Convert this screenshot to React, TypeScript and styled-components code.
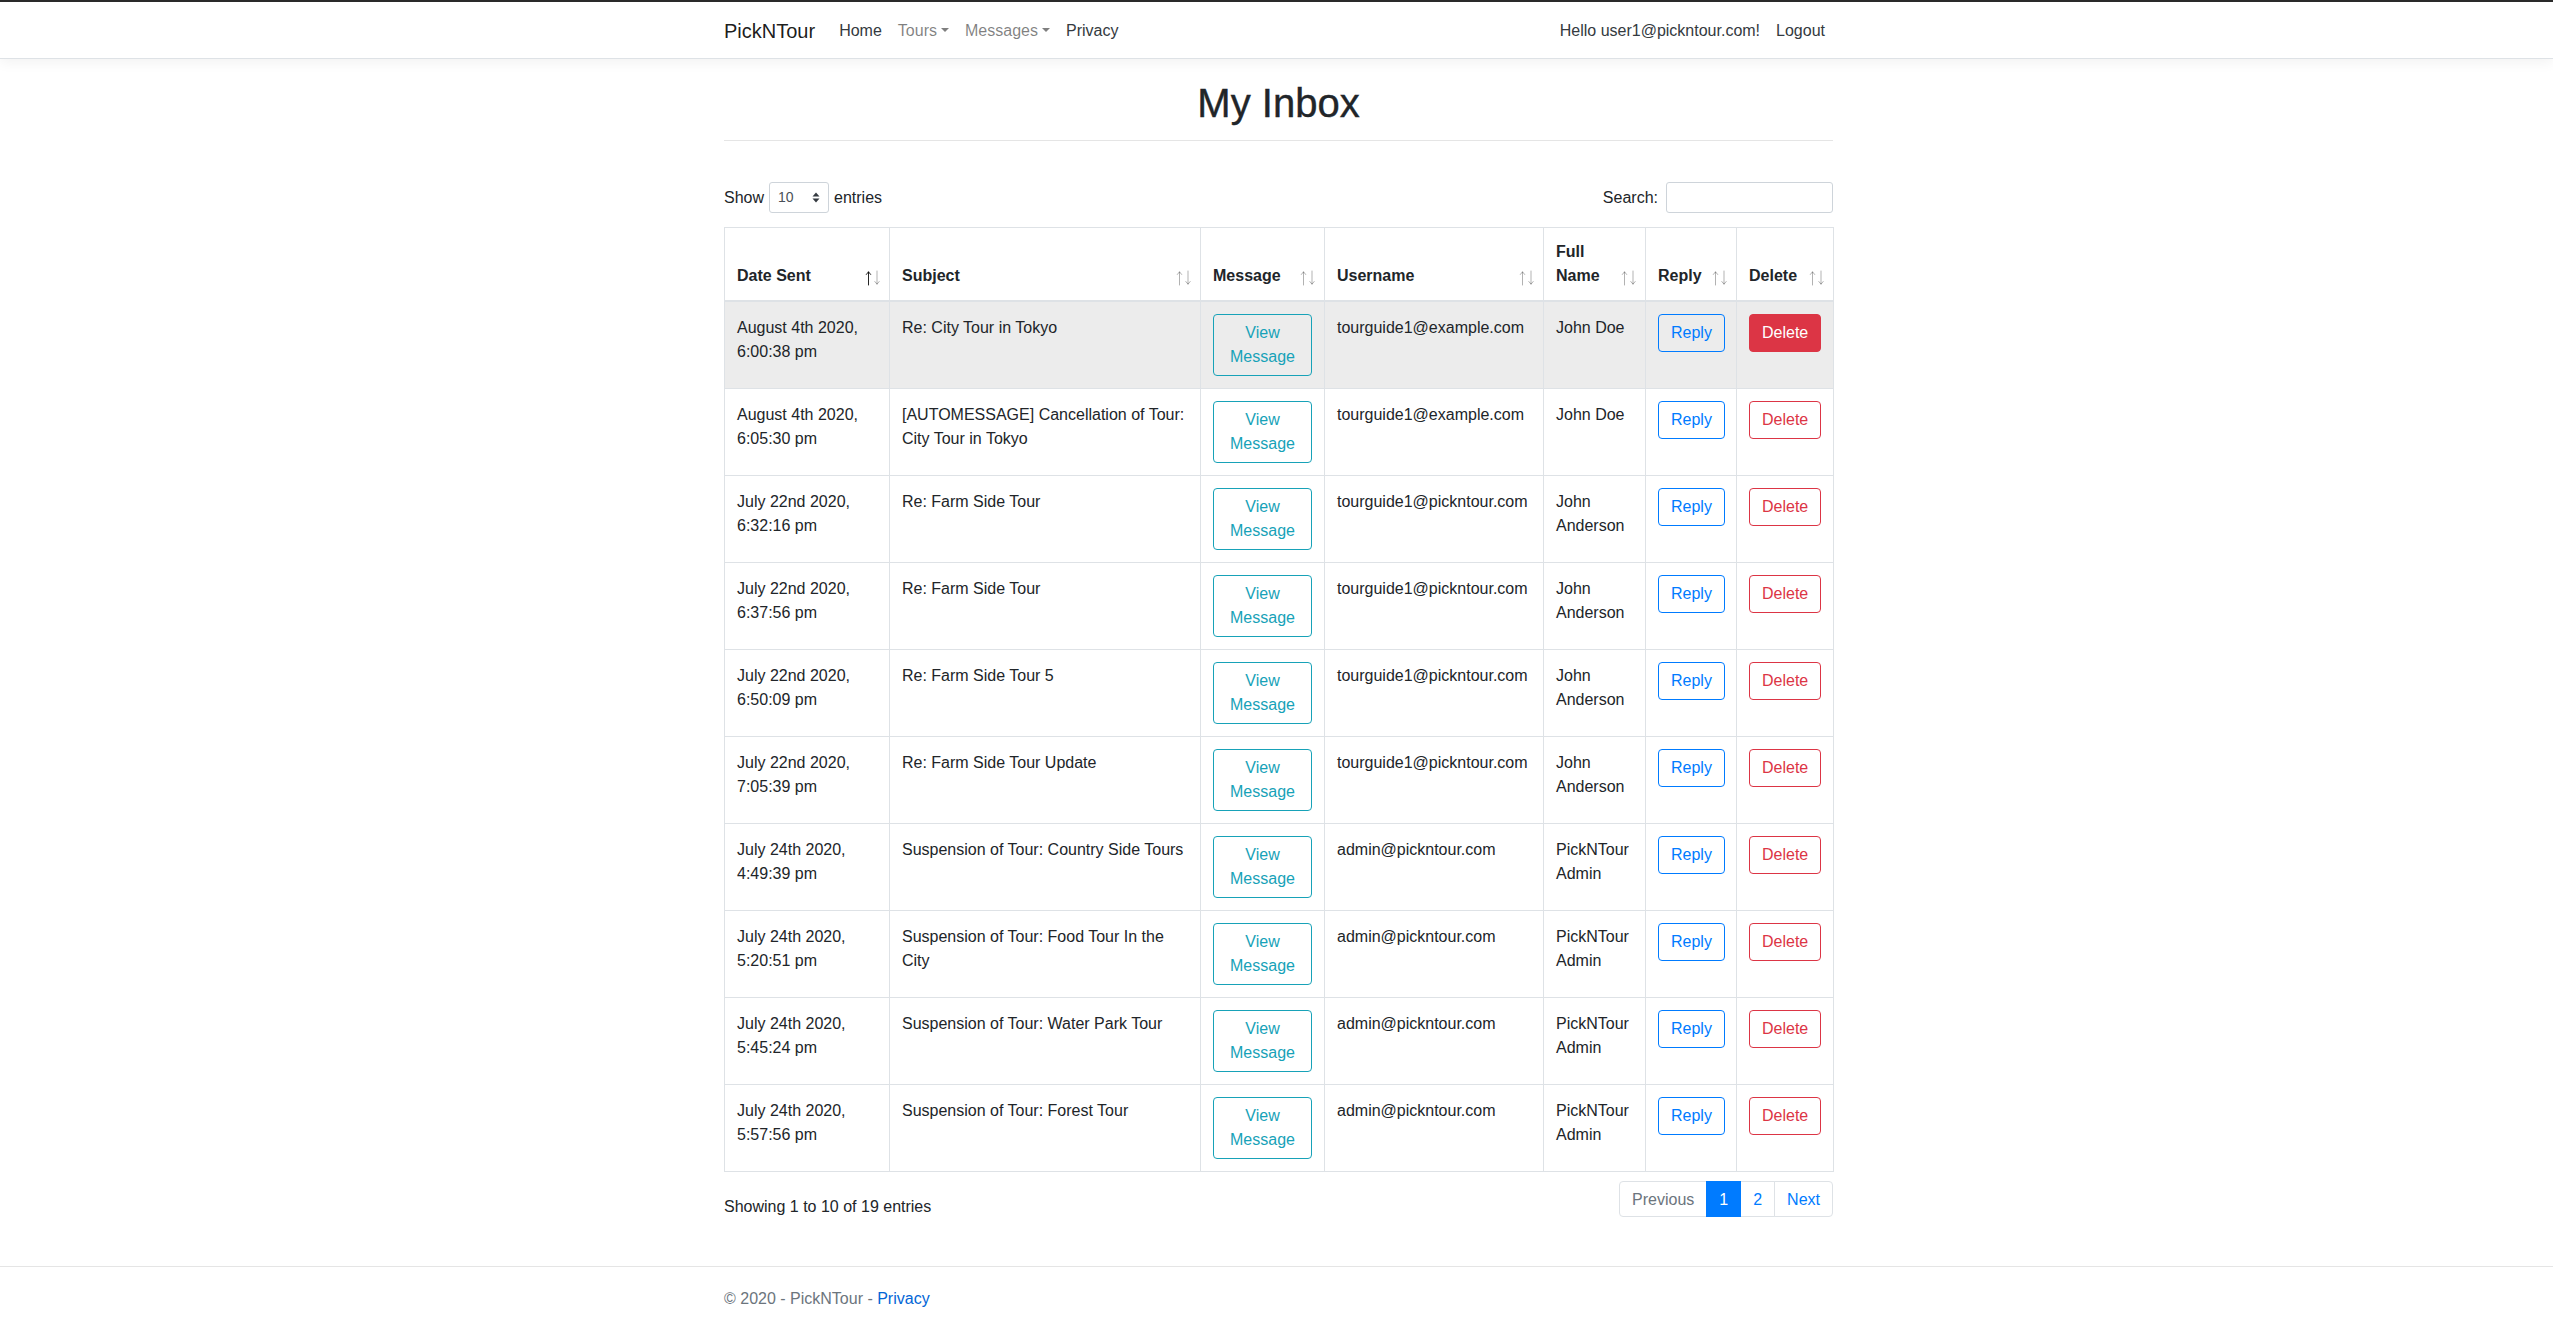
import React from 'react';
import styled, { createGlobalStyle, css } from 'styled-components';

const GlobalStyle = createGlobalStyle`
  html, body {
    margin: 0;
    padding: 0;
  }
  body {
    font-family: "Liberation Sans", Arial, sans-serif;
    font-size: 16px;
    line-height: 1.5;
    color: #212529;
    background: #ffffff;
  }
  * {
    box-sizing: border-box;
  }
`;

const Page = styled.div`
  min-height: 100vh;
  display: flex;
  flex-direction: column;
  border-top: 2px solid #2b2b2b;
`;

const Navbar = styled.nav`
  background: #ffffff;
  border-bottom: 1px solid #dee2e6;
  box-shadow: 0 0.25rem 0.75rem rgba(0, 0, 0, 0.05);
  padding: 9px 16px 7px;
`;

const Wrap = styled.div`
  width: 100%;
  max-width: 1113px;
  padding-left: 4px;
  margin: 0 auto;
`;

const NavInner = styled(Wrap)`
  display: flex;
  align-items: center;
`;

const Brand = styled.a`
  font-size: 20px;
  line-height: 30px;
  padding: 5px 0;
  margin-right: 16px;
  color: rgba(0, 0, 0, 0.9);
  text-decoration: none;
`;

const NavList = styled.div`
  display: flex;
  align-items: center;
  flex: 1;
`;

const NavLink = styled.a<{ $muted?: boolean; $toggle?: boolean }>`
  padding: 8px;
  line-height: 24px;
  color: ${(p) => (p.$muted ? 'rgba(0, 0, 0, 0.5)' : '#343a40')};
  text-decoration: none;

  ${(p) =>
    p.$toggle &&
    css`
      &::after {
        content: '';
        display: inline-block;
        margin-left: 0.255em;
        vertical-align: 0.255em;
        border-top: 0.3em solid;
        border-left: 0.3em solid transparent;
        border-right: 0.3em solid transparent;
      }
    `}
`;

const Main = styled.main`
  flex: 1;
  padding: 20px 0 40px;
`;

const Title = styled.h1`
  margin: 0;
  text-align: center;
  font-size: 40px;
  font-weight: 500;
  line-height: 1.2;
  -webkit-text-stroke: 0.4px #212529;
`;

const Rule = styled.hr`
  margin: 13px 0 0;
  border: 0;
  border-top: 1px solid rgba(0, 0, 0, 0.1);
`;

const Controls = styled.div`
  display: flex;
  justify-content: space-between;
  align-items: center;
  margin-top: 41px;
`;

const Label = styled.label`
  display: flex;
  align-items: center;
  gap: 5px;
`;

const FakeSelect = styled.div`
  width: 60px;
  height: 31px;
  display: inline-flex;
  align-items: center;
  justify-content: space-between;
  padding: 0 8px;
  font-size: 14px;
  color: #495057;
  border: 1px solid #ced4da;
  border-radius: 3px;
`;

const SearchInput = styled.input`
  width: 167px;
  height: 31px;
  margin-left: 3px;
  border: 1px solid #ced4da;
  border-radius: 3px;
  font-size: 14px;
  padding: 4px 8px;
`;

const Table = styled.table`
  width: 100%;
  margin-top: 14px;
  border-collapse: collapse;
  table-layout: fixed;
  border: 1px solid #dee2e6;
`;

const Col = styled.col<{ $w: number }>`
  width: ${(p) => p.$w}px;
`;

const Th = styled.th`
  position: relative;
  padding: 12px 30px 12px 12px;
  text-align: left;
  vertical-align: bottom;
  font-weight: 700;
  border: 1px solid #dee2e6;
  border-bottom-width: 2px;
`;

const SortIcon = styled.svg`
  position: absolute;
  right: 8px;
  bottom: 14px;
`;

const Tr = styled.tr<{ $hover?: boolean }>`
  background: ${(p) => (p.$hover ? '#ececec' : 'transparent')};
`;

const Td = styled.td`
  padding: 12px;
  vertical-align: top;
  border: 1px solid #dee2e6;
`;

const CellText = styled.span`
  display: block;
  padding-top: 2px;
`;

const variants = {
  info: css`
    color: #17a2b8;
    border-color: #17a2b8;
    background: transparent;
  `,
  primary: css`
    color: #007bff;
    border-color: #007bff;
    background: transparent;
  `,
  danger: css`
    color: #dc3545;
    border-color: #dc3545;
    background: transparent;
  `,
  dangerSolid: css`
    color: #ffffff;
    border-color: #dc3545;
    background: #dc3545;
  `,
};

const Btn = styled.button<{ $variant: keyof typeof variants }>`
  display: inline-block;
  font-family: inherit;
  font-size: 16px;
  line-height: 1.5;
  padding: 6px 12px;
  border: 1px solid;
  border-radius: 4px;
  text-align: center;
  cursor: pointer;
  ${(p) => variants[p.$variant]}
`;

const Bottom = styled.div`
  display: flex;
  justify-content: space-between;
  align-items: flex-start;
  margin-top: 9px;
`;

const Info = styled.div`
  padding-top: 14px;
`;

const Pager = styled.ul`
  display: flex;
  list-style: none;
  margin: 0;
  padding: 0;
`;

const PageLink = styled.a<{ $active?: boolean; $disabled?: boolean; $pos?: 'first' | 'last' }>`
  display: block;
  padding: 8px 12px 6px;
  line-height: 20px;
  margin-left: -1px;
  border: 1px solid ${(p) => (p.$active ? '#007bff' : '#dee2e6')};
  background: ${(p) => (p.$active ? '#007bff' : '#ffffff')};
  color: ${(p) => (p.$active ? '#ffffff' : p.$disabled ? '#6c757d' : '#007bff')};
  text-decoration: none;
  position: relative;
  z-index: ${(p) => (p.$active ? 1 : 0)};
  border-radius: ${(p) => (p.$pos === 'first' ? '4px 0 0 4px' : p.$pos === 'last' ? '0 4px 4px 0' : '0')};
`;

const Footer = styled.footer`
  border-top: 1px solid #e5e5e5;
  padding-top: 4px;
  line-height: 56px;
  color: #6c757d;
  white-space: nowrap;
`;

const FooterLink = styled.a`
  color: #0366d6;
  text-decoration: none;
`;

const SortArrows = ({ active }: { active?: boolean }) => (
  <SortIcon width="16" height="16" viewBox="0 0 16 16" fill="none" strokeWidth="1" strokeLinecap="round">
    <g stroke="#000" opacity={active ? 0.85 : 0.3}>
      <path d="M3.5 2v13M1.3 4.5L3.5 1.8l2.2 2.7" />
    </g>
    <g stroke="#000" opacity={0.3}>
      <path d="M12 1v13M9.8 11.5L12 14.2l2.2-2.7" />
    </g>
  </SortIcon>
);

const SelectArrows = () => (
  <svg width="8" height="11" viewBox="0 0 8 11">
    <path d="M4 0.5L7.5 4.5H0.5z M4 10.5L7.5 6.5H0.5z" fill="#343a40" />
  </svg>
);

const messages = [
  { date: 'August 4th 2020, 6:00:38 pm', subject: 'Re: City Tour in Tokyo', user: 'tourguide1@example.com', name: 'John Doe' },
  { date: 'August 4th 2020, 6:05:30 pm', subject: '[AUTOMESSAGE] Cancellation of Tour: City Tour in Tokyo', user: 'tourguide1@example.com', name: 'John Doe' },
  { date: 'July 22nd 2020, 6:32:16 pm', subject: 'Re: Farm Side Tour', user: 'tourguide1@pickntour.com', name: 'John Anderson' },
  { date: 'July 22nd 2020, 6:37:56 pm', subject: 'Re: Farm Side Tour', user: 'tourguide1@pickntour.com', name: 'John Anderson' },
  { date: 'July 22nd 2020, 6:50:09 pm', subject: 'Re: Farm Side Tour 5', user: 'tourguide1@pickntour.com', name: 'John Anderson' },
  { date: 'July 22nd 2020, 7:05:39 pm', subject: 'Re: Farm Side Tour Update', user: 'tourguide1@pickntour.com', name: 'John Anderson' },
  { date: 'July 24th 2020, 4:49:39 pm', subject: 'Suspension of Tour: Country Side Tours', user: 'admin@pickntour.com', name: 'PickNTour Admin' },
  { date: 'July 24th 2020, 5:20:51 pm', subject: 'Suspension of Tour: Food Tour In the City', user: 'admin@pickntour.com', name: 'PickNTour Admin' },
  { date: 'July 24th 2020, 5:45:24 pm', subject: 'Suspension of Tour: Water Park Tour', user: 'admin@pickntour.com', name: 'PickNTour Admin' },
  { date: 'July 24th 2020, 5:57:56 pm', subject: 'Suspension of Tour: Forest Tour', user: 'admin@pickntour.com', name: 'PickNTour Admin' },
];

const columns = [
  { title: 'Date Sent', w: 165 },
  { title: 'Subject', w: 311 },
  { title: 'Message', w: 124 },
  { title: 'Username', w: 219 },
  { title: 'Full Name', w: 102 },
  { title: 'Reply', w: 91 },
  { title: 'Delete', w: 97 },
];

const App: React.FC = () => {
  return (
    <Page>
      <GlobalStyle />
      <Navbar>
        <NavInner>
          <Brand href="#">PickNTour</Brand>
          <NavList>
            <NavLink href="#">Home</NavLink>
            <NavLink href="#" $muted $toggle>Tours</NavLink>
            <NavLink href="#" $muted $toggle>Messages</NavLink>
            <NavLink href="#">Privacy</NavLink>
          </NavList>
          <NavLink href="#">Hello user1@pickntour.com!</NavLink>
          <NavLink href="#">Logout</NavLink>
        </NavInner>
      </Navbar>

      <Main>
        <Wrap>
          <Title>My Inbox</Title>
          <Rule />

          <Controls>
            <Label>
              Show
              <FakeSelect>
                <span>10</span>
                <SelectArrows />
              </FakeSelect>
              entries
            </Label>
            <Label>
              Search:
              <SearchInput type="search" />
            </Label>
          </Controls>

          <Table>
            <colgroup>
              {columns.map((c) => (
                <Col key={c.title} $w={c.w} />
              ))}
            </colgroup>
            <thead>
              <tr>
                {columns.map((c, i) => (
                  <Th key={c.title}>
                    {c.title}
                    <SortArrows active={i === 0} />
                  </Th>
                ))}
              </tr>
            </thead>
            <tbody>
              {messages.map((m, i) => (
                <Tr key={i} $hover={i === 0}>
                  <Td>
                    <CellText>{m.date}</CellText>
                  </Td>
                  <Td>
                    <CellText>{m.subject}</CellText>
                  </Td>
                  <Td>
                    <Btn $variant="info">View Message</Btn>
                  </Td>
                  <Td>
                    <CellText>{m.user}</CellText>
                  </Td>
                  <Td>
                    <CellText>{m.name}</CellText>
                  </Td>
                  <Td>
                    <Btn $variant="primary">Reply</Btn>
                  </Td>
                  <Td>
                    <Btn $variant={i === 0 ? 'dangerSolid' : 'danger'}>Delete</Btn>
                  </Td>
                </Tr>
              ))}
            </tbody>
          </Table>

          <Bottom>
            <Info>Showing 1 to 10 of 19 entries</Info>
            <Pager>
              <li>
                <PageLink $disabled $pos="first">Previous</PageLink>
              </li>
              <li>
                <PageLink href="#" $active>1</PageLink>
              </li>
              <li>
                <PageLink href="#">2</PageLink>
              </li>
              <li>
                <PageLink href="#" $pos="last">Next</PageLink>
              </li>
            </Pager>
          </Bottom>
        </Wrap>
      </Main>

      <Footer>
        <Wrap>
          © 2020 - PickNTour - <FooterLink href="#">Privacy</FooterLink>
        </Wrap>
      </Footer>
    </Page>
  );
};

export default App;
